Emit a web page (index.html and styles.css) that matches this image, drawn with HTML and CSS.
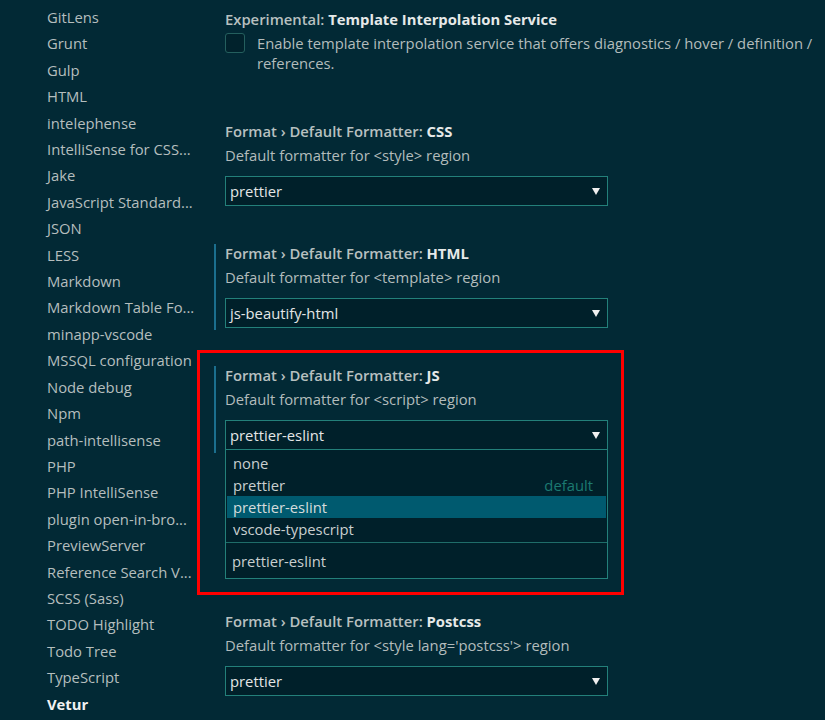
FILE: index.html
```html
<!DOCTYPE html>
<html>
<head>
<meta charset="utf-8">
<link rel="stylesheet" href="styles.css">
</head>
<body>
<div class="layout">
  <nav class="toc">
    <div class="toc-item">GitLens</div>
    <div class="toc-item">Grunt</div>
    <div class="toc-item">Gulp</div>
    <div class="toc-item">HTML</div>
    <div class="toc-item">intelephense</div>
    <div class="toc-item">IntelliSense for CSS...</div>
    <div class="toc-item">Jake</div>
    <div class="toc-item">JavaScript Standard...</div>
    <div class="toc-item">JSON</div>
    <div class="toc-item">LESS</div>
    <div class="toc-item">Markdown</div>
    <div class="toc-item">Markdown Table Fo...</div>
    <div class="toc-item">minapp-vscode</div>
    <div class="toc-item">MSSQL configuration</div>
    <div class="toc-item">Node debug</div>
    <div class="toc-item">Npm</div>
    <div class="toc-item">path-intellisense</div>
    <div class="toc-item">PHP</div>
    <div class="toc-item">PHP IntelliSense</div>
    <div class="toc-item">plugin open-in-bro...</div>
    <div class="toc-item">PreviewServer</div>
    <div class="toc-item">Reference Search V...</div>
    <div class="toc-item">SCSS (Sass)</div>
    <div class="toc-item">TODO Highlight</div>
    <div class="toc-item">Todo Tree</div>
    <div class="toc-item">TypeScript</div>
    <div class="toc-item active">Vetur</div>
  </nav>

  <main class="settings">
    <section class="setting setting-bool">
      <div class="head">
        <div class="title"><span class="cat">Experimental: </span><span class="key">Template Interpolation Service</span></div>
        <div class="bool-row">
          <span class="checkbox"></span>
          <div class="desc">Enable template interpolation service that offers diagnostics / hover / definition / references.</div>
        </div>
      </div>
    </section>

    <section class="setting">
      <div class="head">
        <div class="title"><span class="cat">Format › Default Formatter: </span><span class="key">CSS</span></div>
        <div class="desc">Default formatter for &lt;style&gt; region</div>
        <div class="select"><span>prettier</span><svg class="arrow" width="8" height="7" viewBox="0 0 8 7"><path d="M0 0H8L4 7Z" fill="#f0f0f0"/></svg></div>
      </div>
    </section>

    <section class="setting">
      <div class="head focused">
        <div class="title"><span class="cat">Format › Default Formatter: </span><span class="key">HTML</span></div>
        <div class="desc">Default formatter for &lt;template&gt; region</div>
        <div class="select"><span>js-beautify-html</span><svg class="arrow" width="8" height="7" viewBox="0 0 8 7"><path d="M0 0H8L4 7Z" fill="#f0f0f0"/></svg></div>
      </div>
    </section>

    <div class="annotation">
      <section class="setting">
        <div class="head focused open">
          <div class="title"><span class="cat">Format › Default Formatter: </span><span class="key">JS</span></div>
          <div class="desc">Default formatter for &lt;script&gt; region</div>
          <div class="select"><span>prettier-eslint</span><svg class="arrow" width="8" height="7" viewBox="0 0 8 7"><path d="M0 0H8L4 7Z" fill="#f0f0f0"/></svg></div>
        </div>
        <div class="dropdown">
          <ul class="options">
            <li class="option">none</li>
            <li class="option"><span>prettier</span><span class="hint">default</span></li>
            <li class="option selected">prettier-eslint</li>
            <li class="option">vscode-typescript</li>
          </ul>
          <div class="option-desc">prettier-eslint</div>
        </div>
      </section>
    </div>

    <section class="setting">
      <div class="head">
        <div class="title"><span class="cat">Format › Default Formatter: </span><span class="key">Postcss</span></div>
        <div class="desc">Default formatter for &lt;style lang='postcss'&gt; region</div>
        <div class="select"><span>prettier</span><svg class="arrow" width="8" height="7" viewBox="0 0 8 7"><path d="M0 0H8L4 7Z" fill="#f0f0f0"/></svg></div>
      </div>
    </section>
  </main>
</div>
</body>
</html>
```

FILE: styles.css
```css
html, body {
  margin: 0;
  padding: 0;
  background: #022935;
  height: 100%;
  overflow: hidden;
}

body {
  font-family: "Open Sans", "Noto Sans", sans-serif;
  font-size: 14.8px;
  color: #b8c1c1;
}

.layout {
  display: grid;
  grid-template-columns: 225px 1fr;
}

.toc {
  padding: 4px 0 0 47px;
}

.toc-item {
  line-height: 26.4px;
  white-space: nowrap;
  color: #b5bebe;
}

.toc-item.active {
  font-weight: 700;
  color: #f2f2f2;
}

.settings {
  padding-right: 6px;
}

.setting {
  margin-bottom: 36px;
}

.head {
  margin-left: -11px;
  padding-left: 9px;
  padding-bottom: 2px;
  border-left: 2px solid transparent;
}

.head.focused {
  border-left-color: #1b6f8e;
}

.head.open {
  padding-bottom: 3px;
  margin-bottom: -3px;
}

.setting-bool {
  margin-top: 10px;
  margin-bottom: 49px;
}

.setting-bool .head {
  padding-bottom: 0;
}

.title {
  line-height: 18px;
  font-weight: 600;
  white-space: nowrap;
}

.title .cat {
  color: #b8c0c0;
}

.title .key {
  color: #e6e9e9;
  font-weight: 700;
}

.desc {
  margin-top: 3px;
  line-height: 24px;
  color: #b3bcbc;
}

.bool-row {
  display: flex;
  gap: 12px;
  margin-top: 5px;
}

.checkbox {
  flex: none;
  width: 18px;
  height: 18px;
  border: 1px solid #245f5e;
  border-radius: 3px;
  background: #01222c;
}

.bool-row .desc {
  margin-top: 0;
  line-height: 20px;
}

.select {
  box-sizing: border-box;
  width: 383px;
  height: 30px;
  margin-top: 9px;
  border: 1px solid #23807a;
  background: #00202a;
  display: flex;
  align-items: center;
  justify-content: space-between;
  padding: 0 7px 0 4px;
  color: #e4e6e6;
}

.arrow {
  flex: none;
}

.annotation {
  margin-top: -16px;
  margin-left: -28px;
  width: 427px;
  box-sizing: border-box;
  border: 3px solid #ff0000;
  padding: 13px 0 13px 25px;
  margin-bottom: 17px;
}

.annotation .setting {
  margin-bottom: 0;
}

.dropdown {
  position: relative;
  box-sizing: border-box;
  width: 383px;
  border: 1px solid #23807a;
  border-top: none;
  background: #00202a;
}

.options {
  list-style: none;
  margin: 0;
  padding: 2px 1px 0;
}

.option {
  height: 22px;
  line-height: 22px;
  padding: 0 13px 0 6px;
  display: flex;
  justify-content: space-between;
  color: #c9cfcf;
}

.option.selected {
  background: #005a6f;
  color: #d6dcdc;
}

.hint {
  color: #1c7a71;
}

.option-desc {
  margin-top: 2px;
  border-top: 1px solid #1f6d69;
  padding: 7px 6px 6px;
  line-height: 22px;
  color: #c9cfcf;
}
```
